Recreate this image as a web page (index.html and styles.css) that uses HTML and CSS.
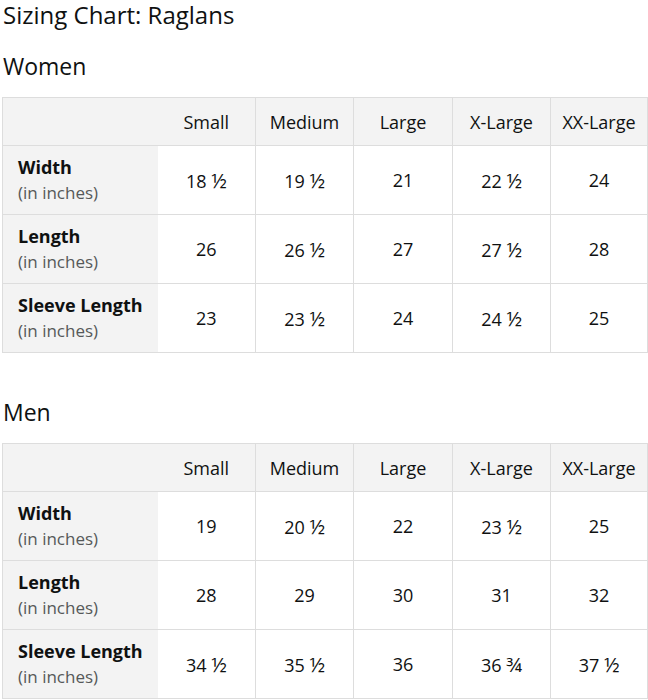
FILE: index.html
```html
<!DOCTYPE html>
<html>
<head>
<meta charset="utf-8">
<link rel="stylesheet" href="styles.css">
</head>
<body>
<div class="page">
  <h1 class="title">Sizing Chart: Raglans</h1>

  <h2 class="section">Women</h2>
  <table class="chart">
    <colgroup>
      <col class="c-label"><col class="c-s"><col class="c-m"><col class="c-l"><col class="c-xl"><col class="c-xxl">
    </colgroup>
    <thead>
      <tr><th class="corner"></th><th>Small</th><th>Medium</th><th>Large</th><th>X-Large</th><th>XX-Large</th></tr>
    </thead>
    <tbody>
      <tr><th class="label"><b>Width</b><span>(in inches)</span></th><td class="first">18 <span class="frac">½</span></td><td>19 <span class="frac">½</span></td><td>21</td><td>22 <span class="frac">½</span></td><td>24</td></tr>
      <tr><th class="label"><b>Length</b><span>(in inches)</span></th><td class="first">26</td><td>26 <span class="frac">½</span></td><td>27</td><td>27 <span class="frac">½</span></td><td>28</td></tr>
      <tr><th class="label"><b>Sleeve Length</b><span>(in inches)</span></th><td class="first">23</td><td>23 <span class="frac">½</span></td><td>24</td><td>24 <span class="frac">½</span></td><td>25</td></tr>
    </tbody>
  </table>

  <h2 class="section men">Men</h2>
  <table class="chart">
    <colgroup>
      <col class="c-label"><col class="c-s"><col class="c-m"><col class="c-l"><col class="c-xl"><col class="c-xxl">
    </colgroup>
    <thead>
      <tr><th class="corner"></th><th>Small</th><th>Medium</th><th>Large</th><th>X-Large</th><th>XX-Large</th></tr>
    </thead>
    <tbody>
      <tr><th class="label"><b>Width</b><span>(in inches)</span></th><td class="first">19</td><td>20 <span class="frac">½</span></td><td>22</td><td>23 <span class="frac">½</span></td><td>25</td></tr>
      <tr><th class="label"><b>Length</b><span>(in inches)</span></th><td class="first">28</td><td>29</td><td>30</td><td>31</td><td>32</td></tr>
      <tr><th class="label"><b>Sleeve Length</b><span>(in inches)</span></th><td class="first">34 <span class="frac">½</span></td><td>35 <span class="frac">½</span></td><td>36</td><td>36 <span class="frac">¾</span></td><td>37 <span class="frac">½</span></td></tr>
    </tbody>
  </table>
</div>
</body>
</html>
```

FILE: styles.css
```css
html, body {
  margin: 0;
  padding: 0;
  background: #fff;
}

.page {
  padding: 0 1px 0 2px;
  font-family: "Open Sans", "Noto Sans", sans-serif;
  color: #0f1111;
}

.title {
  margin: 0;
  padding: 1px 0 0 1px;
  font-size: 24px;
  font-weight: 500;
  line-height: 27px;
}

.section {
  margin: 23px 0 16px;
  padding-left: 1px;
  font-size: 23px;
  font-weight: 400;
  line-height: 30px;
}

.section.men {
  margin-top: 44px;
}

.chart {
  width: 645px;
  border-collapse: collapse;
  table-layout: fixed;
  font-size: 18px;
}

.c-label { width: 155px; }
.c-s { width: 98px; }
.c-m { width: 98px; }
.c-l { width: 99px; }
.c-xl { width: 98px; }
.c-xxl { width: 97px; }

.chart th,
.chart td {
  border: 1px solid #dddddd;
  text-align: center;
  vertical-align: middle;
  font-weight: 400;
  padding: 0;
}

.chart thead th {
  background: #f3f3f3;
  height: 47px;
}

.chart thead th.corner {
  border-right: none;
}

.chart thead th.corner + th {
  border-left: none;
}

.chart tbody td,
.chart tbody th {
  height: 68px;
}

.chart th.label {
  background: #f3f3f3;
  text-align: left;
  padding-left: 15px;
  border-right: none;
  line-height: 25px;
}

.chart td.first {
  border-left: none;
}

.frac {
  font-size: 1.12em;
}

.label b {
  display: block;
  font-weight: 700;
}

.label span {
  display: block;
  color: #565959;
  font-size: 17px;
}
```
